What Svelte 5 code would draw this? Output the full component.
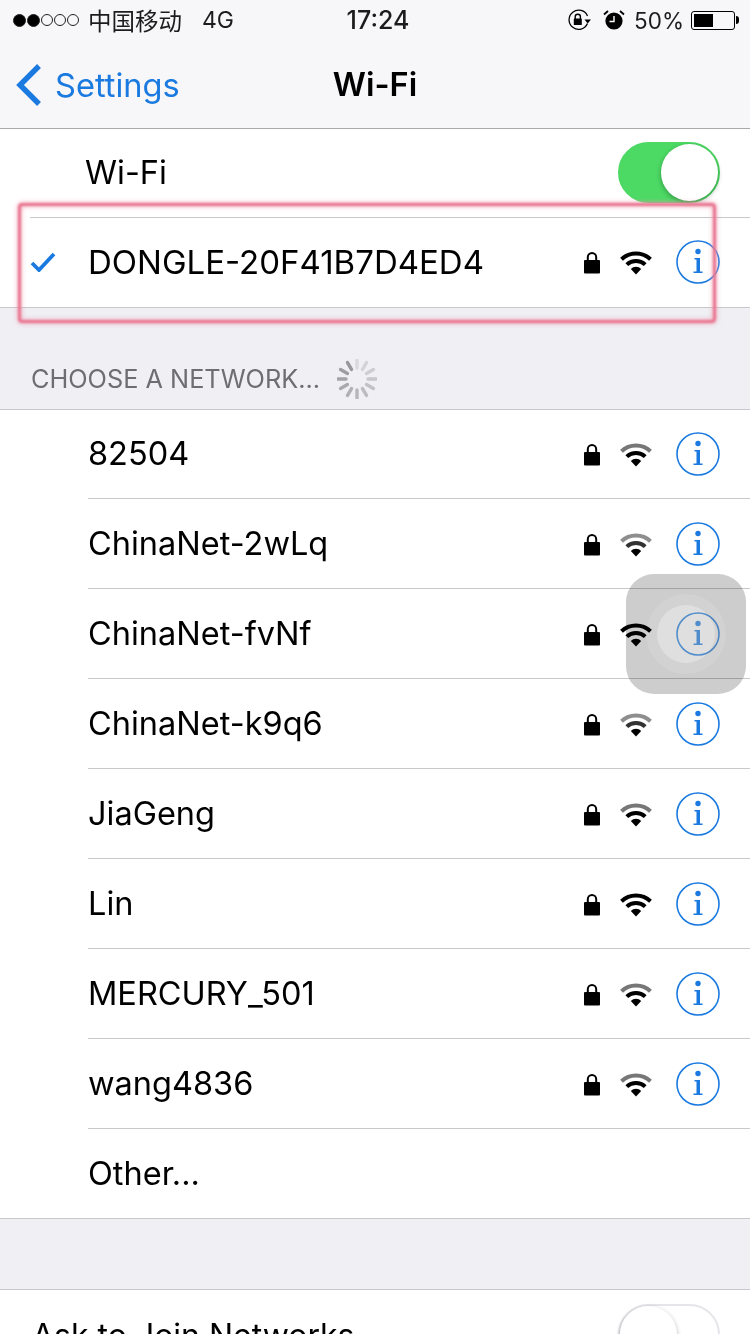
<script>
  const networks = [
    { name: '82504', full: false },
    { name: 'ChinaNet-2wLq', full: false, weak: true },
    { name: 'ChinaNet-fvNf', full: true, faded: true },
    { name: 'ChinaNet-k9q6', full: false, weak: true },
    { name: 'JiaGeng', full: false },
    { name: 'Lin', full: true },
    { name: 'MERCURY_501', full: false },
    { name: 'wang4836', full: false }
  ];
  const ticks = Array.from({ length: 12 }, (_, i) => i);
</script>

{#snippet lock()}
  <svg class="lock" viewBox="0 0 18 24" width="18" height="24">
    <path d="M4.8 12V7.2a4.2 4.2 0 0 1 8.4 0V12" fill="none" stroke="#000" stroke-width="2" />
    <rect x="1" y="10" width="16" height="13.5" rx="1" fill="#000" />
  </svg>
{/snippet}

{#snippet wifi(full, weak)}
  <svg class="wifi" viewBox="0 0 32 26" width="32" height="26">
    <path d="M1.5 10.2A21 21 0 0 1 30.5 10.2" fill="none" stroke={full ? '#000' : weak ? '#8e8e8e' : '#777'} stroke-width="4" />
    <path d="M6.8 15.6A13.5 13.5 0 0 1 25.2 15.6" fill="none" stroke={weak ? '#333' : '#000'} stroke-width="4" />
    <path d="M10.8 20A7 7 0 0 1 21.2 20L16 25.5Z" fill="#000" />
  </svg>
{/snippet}

{#snippet info()}
  <svg class="info" viewBox="0 0 44 44" width="44" height="44">
    <circle cx="22" cy="22" r="21" fill="none" stroke="#1a7ae0" stroke-width="1.6" />
    <circle cx="22" cy="11.5" r="2.7" fill="#1a7ae0" />
    <path d="M18.5 18H24V31.5H26.5V33H17.5V31.5H20.5V19.5H18.5Z" fill="#1a7ae0" />
  </svg>
{/snippet}

<div class="screen">
  <header class="top">
    <div class="status">
      <div class="carrier">
        <span class="dots">
          <i class="on"></i><i class="on"></i><i></i><i></i><i></i>
        </span>
        <span class="cn">中国移动</span>
        <span class="net">4G</span>
      </div>
      <div class="time">17:24</div>
      <div class="right">
        <svg viewBox="0 0 26 22" width="26" height="22">
          <path d="M20.5 14.5A9.6 9.6 0 1 1 20.5 7" fill="none" stroke="#000" stroke-width="1.3" />
          <path d="M17.5 10.5H24L20.7 14.5Z" fill="#000" />
          <path d="M8.2 10V7.8a2.6 2.6 0 0 1 5.2 0V10" fill="none" stroke="#000" stroke-width="1.4" />
          <rect x="6.8" y="9.5" width="8" height="6.5" rx=".6" fill="#000" />
        </svg>
        <svg class="alarm" viewBox="0 0 22 22" width="22" height="22">
          <circle cx="11" cy="12" r="8.6" fill="#000" />
          <path d="M11 7V12.5H6.5" fill="none" stroke="#fff" stroke-width="1.4" />
          <path d="M1 5.5L5 2M21 5.5L17 2" stroke="#000" stroke-width="1.8" />
        </svg>
        <span class="pct">50%</span>
        <span class="battery"><span class="level" style="width: 50%"></span></span>
        <span class="tip"></span>
      </div>
    </div>
    <nav class="nav">
      <div class="back">
        <svg viewBox="0 0 26 44" width="26" height="44">
          <path d="M23 3L4 22L23 41" fill="none" stroke="#1a7ae0" stroke-width="5.4" />
        </svg>
        <span>Settings</span>
      </div>
      <div class="title">Wi-Fi</div>
    </nav>
  </header>

  <section class="group">
    <div class="row wifi-row">
      <span class="label">Wi-Fi</span>
      <span class="toggle on"><span class="knob"></span></span>
    </div>
    <div class="row current">
      <svg class="check" viewBox="0 0 26 20" width="26" height="20">
        <path d="M2 11L9 18L24 2" fill="none" stroke="#1a7ae0" stroke-width="3.8" />
      </svg>
      <span class="name">DONGLE-20F41B7D4ED4</span>
      {@render lock()}
      {@render wifi(true, false)}
      {@render info()}
    </div>
  </section>

  <div class="section-head">
    <span>CHOOSE A NETWORK...</span>
    <svg viewBox="-20 -20 40 40" width="40" height="40">
      {#each ticks as t}
        <line x1="0" y1="-11" x2="0" y2="-19" stroke="#8e8e93" stroke-width="3.4" stroke-linecap="round"
          opacity={0.22 + ((t + 6) % 12) * 0.062}
          transform="rotate({t * 30 + 180})" />
      {/each}
    </svg>
  </div>

  <section class="group list">
    {#each networks as n}
      <div class="row net-row" class:faded={n.faded}>
        <span class="name">{n.name}</span>
        {@render lock()}
        {@render wifi(n.full, n.weak)}
        {@render info()}
      </div>
    {/each}
    <div class="row net-row last">
      <span class="name">Other...</span>
    </div>
  </section>

  <section class="group ask">
    <div class="row ask-row">
      <span class="label">Ask to Join Networks</span>
      <span class="toggle"><span class="knob"></span></span>
    </div>
  </section>

  <div class="highlight"></div>
  <div class="touch"><span class="halo"><span class="core"></span></span></div>
</div>

<style>
  :global(body) {
    margin: 0;
    background: #efeff4;
  }

  .screen {
    position: relative;
    width: 750px;
    height: 1334px;
    overflow: hidden;
    background: #efeff4;
    color: #000;
    font-family: Inter, Roboto, "Liberation Sans", "Noto Sans CJK SC", sans-serif;
  }

  .top {
    background: #f7f7f9;
    border-bottom: 1px solid #a9a9ac;
  }

  .status {
    height: 40px;
    display: grid;
    grid-template-columns: 1fr auto 1fr;
    align-items: center;
    padding: 0 11px 0 12px;
    font-size: 23px;
    color: #1c1c1c;
  }

  .carrier {
    display: flex;
    align-items: center;
  }

  .dots {
    display: flex;
    margin-right: 9px;
  }

  .dots i {
    width: 12px;
    height: 12px;
    border: 1px solid #222;
    border-radius: 50%;
    box-sizing: border-box;
    margin: 0 .5px;
  }

  .dots i.on {
    background: #000;
    width: 13px;
    height: 13px;
  }

  .cn {
    font-size: 23.5px;
    margin-right: 20px;
  }

  .time {
    font-size: 25px;
    font-weight: 500;
    margin-left: 5px;
  }

  .right {
    display: flex;
    align-items: center;
    justify-content: flex-end;
  }

  .alarm {
    margin-left: 10px;
  }

  .pct {
    margin: 0 7px 0 9px;
    font-size: 22.5px;
  }

  .battery {
    width: 44px;
    height: 19px;
    box-sizing: border-box;
    border: 1px solid #000;
    border-radius: 3px;
    padding: 2px;
    display: block;
  }

  .level {
    display: block;
    height: 100%;
    background: #000;
  }

  .tip {
    width: 3px;
    height: 8px;
    margin-left: 1px;
    background: #000;
    border-radius: 0 3px 3px 0;
  }

  .nav {
    position: relative;
    height: 88px;
    display: flex;
    align-items: center;
    justify-content: center;
  }

  .back {
    position: absolute;
    left: 16px;
    top: 23px;
    display: flex;
    align-items: center;
    gap: 13px;
    color: #1a7ae0;
    font-size: 32.6px;
  }

  .title {
    font-size: 32.5px;
    font-weight: 600;
    margin-top: 1px;
  }

  .group {
    background: #fff;
  }

  .row {
    display: flex;
    align-items: center;
    box-sizing: border-box;
  }

  .wifi-row {
    height: 89px;
    padding: 0 30px 2px 85px;
    justify-content: space-between;
    position: relative;
  }

  .wifi-row::after {
    content: "";
    position: absolute;
    left: 30px;
    right: 0;
    bottom: 0;
    height: 1px;
    background: #c8c7cc;
  }

  .label,
  .name {
    font-size: 32.5px;
  }

  .ask-row .label {
    font-size: 32px;
  }

  .current {
    height: 90px;
    padding: 0 30px 1px;
    border-bottom: 1px solid #c8c7cc;
  }

  .current .name {
    font-size: 33px;
  }

  .check {
    margin-right: 32px;
  }

  .name {
    flex: 1;
  }

  .lock {
    margin-right: 19px;
  }

  .wifi {
    margin-right: 24px;
  }

  .section-head {
    height: 102px;
    box-sizing: border-box;
    padding: 40px 0 0 31px;
    display: flex;
    align-items: center;
    gap: 17px;
    color: #6d6d72;
    font-size: 25.3px;
    border-bottom: 1px solid #c8c7cc;
  }

  .list {
    border-bottom: 1px solid #c8c7cc;
  }

  .net-row {
    height: 90px;
    margin-left: 88px;
    padding-right: 30px;
    border-bottom: 1px solid #c8c7cc;
  }

  .net-row:first-child {
    height: 89px;
    padding-bottom: 1px;
  }

  .net-row.last {
    height: 89px;
    border-bottom: 0;
  }

  .net-row.faded .info {
    opacity: .7;
  }

  .ask {
    margin-top: 70px;
    border-top: 1px solid #c8c7cc;
  }

  .ask-row {
    height: 90px;
    padding: 0 30px 0 32px;
    justify-content: space-between;
  }

  .toggle {
    display: block;
    width: 102px;
    height: 61px;
    box-sizing: border-box;
    border-radius: 31px;
    border: 2px solid #e5e5ea;
    background: #fff;
    position: relative;
  }

  .toggle.on {
    background: #4cd964;
    border-color: #4cd964;
  }

  .ask-row .toggle {
    margin-bottom: 2px;
  }

  .knob {
    position: absolute;
    left: 0;
    top: 0;
    width: 57px;
    height: 57px;
    border-radius: 50%;
    background: #fff;
    box-shadow: 0 2px 5px rgba(0, 0, 0, .3);
  }

  .toggle.on .knob {
    left: 41px;
  }

  .highlight {
    position: absolute;
    left: 18px;
    top: 203px;
    width: 698px;
    height: 120px;
    box-sizing: border-box;
    border: 3px solid #e8728e;
    border-radius: 4px;
    box-shadow: 0 0 5px #ef9fb2, inset 0 0 5px #ef9fb2;
    filter: blur(1px);
  }

  .touch {
    position: absolute;
    left: 626px;
    top: 574px;
    width: 120px;
    height: 120px;
    border-radius: 28px;
    background: #cdcdcd;
    mix-blend-mode: multiply;
    display: flex;
    align-items: center;
    justify-content: center;
  }

  .halo {
    width: 80px;
    height: 80px;
    border-radius: 50%;
    background: #d2d2d2;
    display: flex;
    align-items: center;
    justify-content: center;
  }

  .core {
    width: 58px;
    height: 58px;
    border-radius: 50%;
    background: #dfdfdf;
  }
</style>
